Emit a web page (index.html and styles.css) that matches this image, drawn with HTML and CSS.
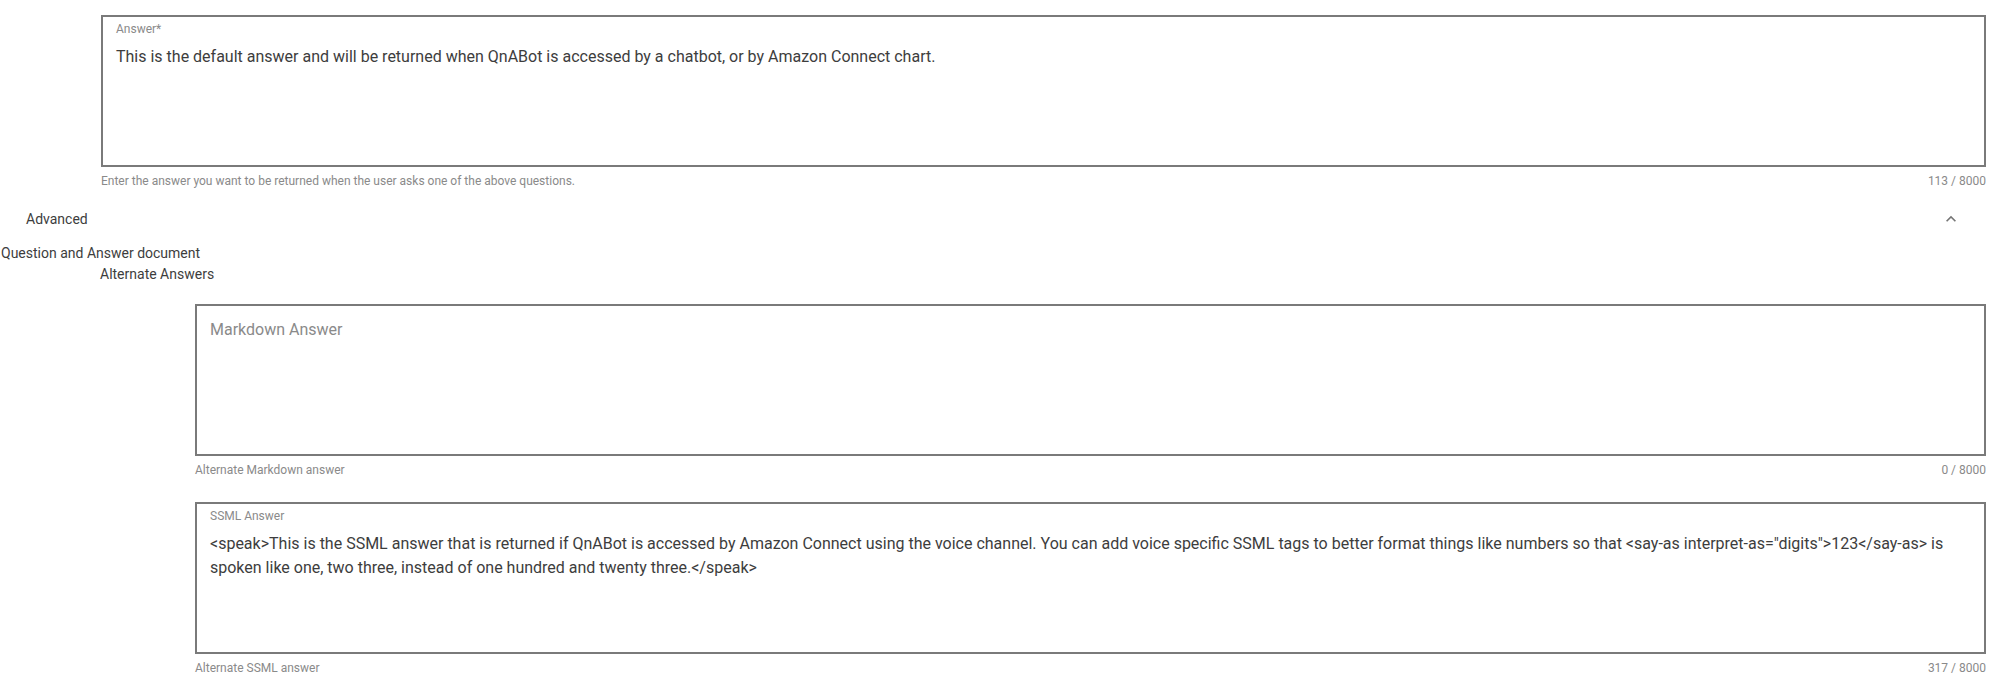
FILE: index.html
```html
<!DOCTYPE html>
<html lang="en">
<head>
    <meta charset="UTF-8">
    <meta name="viewport" content="width=device-width, initial-scale=1.0">
    <title>QnABot - Edit Item</title>
    <link rel="stylesheet" href="styles.css">
</head>
<body>

    <div class="page">
        <!-- Default answer -->
        <div class="field field-main">
            <div class="box">
                <div class="label">Answer*</div>
                <div class="value">This is the default answer and will be returned when QnABot is accessed by a chatbot, or by Amazon Connect chart.</div>
            </div>
            <div class="details">
                <span>Enter the answer you want to be returned when the user asks one of the above questions.</span>
                <span>113 / 8000</span>
            </div>
        </div>

        <!-- Advanced panel -->
        <div class="panel-header">
            <span>Advanced</span>
            <svg class="chevron" viewBox="0 0 24 24" width="20" height="20">
                <path d="M7.41,15.41L12,10.83L16.59,15.41L18,14L12,8L6,14L7.41,15.41Z"/>
            </svg>
        </div>

        <div class="doc-title">Question and Answer document</div>
        <div class="group-title">Alternate Answers</div>

        <div class="field field-alt">
            <div class="box">
                <div class="placeholder">Markdown Answer</div>
            </div>
            <div class="details">
                <span>Alternate Markdown answer</span>
                <span>0 / 8000</span>
            </div>
        </div>

        <div class="field field-alt field-ssml">
            <div class="box">
                <div class="label">SSML Answer</div>
                <div class="value">&lt;speak&gt;This is the SSML answer that is returned if QnABot is accessed by Amazon Connect using the voice channel. You can add voice specific SSML tags to better format things like numbers so that &lt;say-as interpret-as="digits"&gt;123&lt;/say-as&gt; is spoken like one, two three, instead of one hundred and twenty three.&lt;/speak&gt;</div>
            </div>
            <div class="details">
                <span>Alternate SSML answer</span>
                <span>317 / 8000</span>
            </div>
        </div>
    </div>

</body>
</html>
```

FILE: styles.css
```css
body {
    margin: 0;
    background: #ffffff;
    font-family: Roboto, "Noto Sans", sans-serif;
    color: #3d3d3d;
}

.page {
    padding-top: 15px;
}

/* Outlined textarea */
.field {
    margin-right: 17px;
}

.field-main {
    margin-left: 101px;
}

.field-alt {
    margin-left: 195px;
    margin-top: 19px;
}

.field-ssml {
    margin-top: 24px;
}

.box {
    box-sizing: border-box;
    height: 152px;
    border: 2px solid #7a7a7a;
    padding: 4px 15px 0 13px;
}

.label {
    font-size: 12px;
    line-height: 16px;
    color: #8a8a8a;
}

.value {
    margin-top: 8px;
    font-size: 16px;
    line-height: 24px;
}

.placeholder {
    margin-top: 8px;
    font-size: 16px;
    line-height: 24px;
    color: #8a8a8a;
}

.details {
    display: flex;
    justify-content: space-between;
    margin-top: 6px;
    font-size: 12px;
    line-height: 16px;
    color: #8a8a8a;
}

/* Expansion panel */
.panel-header {
    display: flex;
    justify-content: space-between;
    align-items: center;
    height: 48px;
    margin-top: 6px;
    padding: 0 42px 0 26px;
    font-size: 14px;
}

.chevron {
    fill: #757575;
}

.doc-title {
    padding-left: 1px;
    font-size: 14px;
    line-height: 21px;
}

.group-title {
    padding-left: 100px;
    font-size: 14px;
    line-height: 21px;
}
```
